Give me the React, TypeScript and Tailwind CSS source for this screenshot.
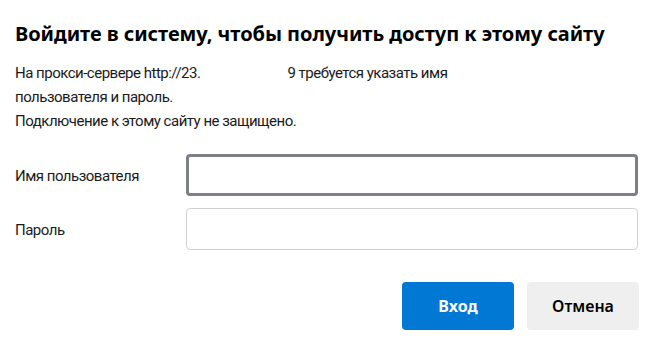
export default function App() {
  return (
    <div
      className="w-[654px] h-[345px] bg-white text-black pl-[15px] pr-[16px] pt-[20px]"
      style={{ fontFamily: '"Noto Sans", "Open Sans", sans-serif' }}
    >
      <h1 className="text-[20px] leading-[28px] font-bold tracking-[-0.05px]">
        Войдите в систему, чтобы получить доступ к этому сайту
      </h1>

      <div
        className="mt-[13px] text-[15px] leading-[24px] tracking-[-0.5px] text-[#1a1a1a]"
        style={{ fontFamily: 'Roboto, "Noto Sans", sans-serif' }}
      >
        <p>
          На прокси-сервере http://23.
          <span className="inline-block w-[87px]" />
          9 требуется указать имя
          <br />
          пользователя и пароль.
        </p>
        <p>Подключение к этому сайту не защищено.</p>
      </div>

      <div
        className="mt-[21px] flex flex-col gap-[12px]"
        style={{ fontFamily: 'Roboto, "Noto Sans", sans-serif' }}
      >
        <div className="flex items-center">
          <label className="w-[171px] pt-[2px] text-[15px] tracking-[-0.5px] text-[#1a1a1a]">Имя пользователя</label>
          <input
            type="text"
            className="flex-1 h-[42px] rounded-[4px] border-[3px] border-[#7d8186] outline-none px-2"
          />
        </div>
        <div className="flex items-center">
          <label className="w-[171px] pt-[2px] text-[15px] tracking-[-0.5px] text-[#1a1a1a]">Пароль</label>
          <input
            type="password"
            className="flex-1 h-[42px] rounded-[4px] border border-[#d1d1d1] outline-none px-2"
          />
        </div>
      </div>

      <div className="mt-[32px] flex justify-end gap-[13px] -mr-[1px]">
        <button className="w-[112px] h-[48px] rounded-[4px] bg-[#0078d4] text-white text-[16px] font-bold">
          Вход
        </button>
        <button className="w-[112px] h-[48px] rounded-[4px] bg-[#efefef] text-black text-[16px] font-semibold">
          Отмена
        </button>
      </div>
    </div>
  );
}
